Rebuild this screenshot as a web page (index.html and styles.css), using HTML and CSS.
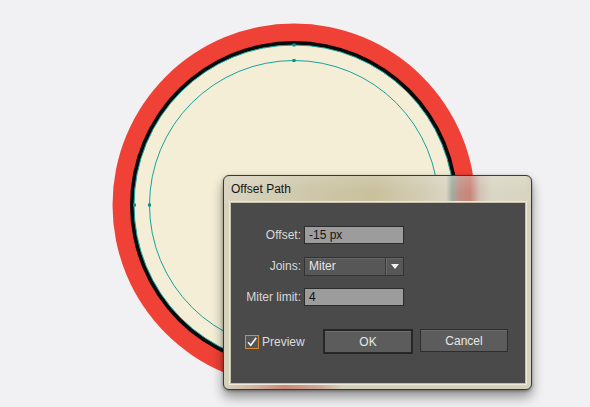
FILE: index.html
```html
<!DOCTYPE html>
<html>
<head>
<meta charset="utf-8">
<link rel="stylesheet" href="styles.css">
</head>
<body>
<div class="stage">
  <svg class="art" width="590" height="407" viewBox="0 0 590 407">
    <circle cx="294" cy="205" r="181.5" fill="#ef4136"/>
    <circle cx="294" cy="205" r="164" fill="#0a0a0a"/>
    <circle cx="294" cy="205" r="160" fill="#f3eed5"/>
    <circle cx="294" cy="205" r="160" fill="none" stroke="#17a2a0" stroke-width="1"/>
    <circle cx="294" cy="205" r="144.5" fill="none" stroke="#17a2a0" stroke-width="1"/>
    <rect x="292.5" y="43.5" width="3" height="3" fill="#0e8f8c"/>
    <rect x="292.5" y="59" width="3" height="3" fill="#0e8f8c"/>
    <rect x="133" y="203.5" width="3" height="3" fill="#0e8f8c"/>
    <rect x="148" y="203.5" width="3" height="3" fill="#0e8f8c"/>
  </svg>

  <div class="dialog">
    <div class="titlebar">Offset Path</div>
    <div class="panel">
      <div class="form">
        <label class="lbl">Offset:</label>
        <div class="field input">-15 px</div>
        <label class="lbl">Joins:</label>
        <div class="field select">
          <span class="sel-text">Miter</span>
          <span class="sel-btn"><span class="arrow"></span></span>
        </div>
        <label class="lbl">Miter limit:</label>
        <div class="field input">4</div>
      </div>
      <div class="footer">
        <div class="check">
          <span class="box">
            <svg width="12" height="12" viewBox="0 0 12 12"><path d="M2 6.2 L4.8 9.2 L10.2 1.8" fill="none" stroke="#f4f4f4" stroke-width="1.6"/></svg>
          </span>
          <span class="check-text">Preview</span>
        </div>
        <div class="buttons">
          <div class="btn btn-default">OK</div>
          <div class="btn">Cancel</div>
        </div>
      </div>
    </div>
  </div>
</div>
</body>
</html>
```

FILE: styles.css
```css
html, body {
  margin: 0;
  padding: 0;
  background: #f1f1f3;
}

.stage {
  position: relative;
  width: 590px;
  height: 407px;
  overflow: hidden;
  font-family: "Liberation Sans", Arial, sans-serif;
}

.art {
  position: absolute;
  left: 0;
  top: 0;
}

.dialog {
  position: absolute;
  left: 223px;
  top: 175px;
  width: 309px;
  height: 215px;
  box-sizing: border-box;
  border: 1px solid #3b3a36;
  border-radius: 6px;
  background:
    linear-gradient(90deg,
      #d9d5c2 0px, #d6d1bb 20px, #cdc6a8 90px, #c9c09d 150px, #d3cdb4 200px,
      #d9d5c1 222px, #9fae9f 228px, #c48f84 236px, #c98579 246px, #d3c3b4 256px,
      #dad6c4 268px, #d8d4c1 309px) top / 100% 27px no-repeat,
    linear-gradient(90deg,
      #d6d1bd 0px, #d2b4a2 30px, #c98a7a 60px, #cfa796 95px, #d6d1bd 120px,
      #d6d1bd 309px) bottom / 100% 6px no-repeat,
    #d6d1bd;
  box-shadow: 0 7px 12px rgba(0, 0, 0, 0.4), 0 1px 3px rgba(0,0,0,0.35);
  display: flex;
  flex-direction: column;
  padding: 0 5px 5px 6px;
}

.titlebar {
  height: 26px;
  box-sizing: border-box;
  padding: 6px 0 0 1px;
  font-size: 12px;
  color: #161616;
  background: linear-gradient(180deg, rgba(255,255,255,0.15), rgba(255,255,255,0) 60%);
}

.panel {
  flex: 1;
  background: #4a4a4a;
  border: 1px solid #c4bfa8;
  box-shadow: 0 0 0 1px #eeeadb;
  display: flex;
  flex-direction: column;
}

.form {
  display: grid;
  grid-template-columns: 70px 100px;
  grid-template-rows: 18px 19px 18px;
  column-gap: 3px;
  row-gap: 12.5px;
  padding-top: 23px;
  align-items: center;
}

.lbl {
  text-align: right;
  font-size: 12px;
  color: #d9d9d9;
  line-height: 18px;
}

.field {
  box-sizing: border-box;
  height: 100%;
  font-size: 12px;
  display: flex;
  align-items: center;
}

.input {
  background: #9c9c9c;
  border: 1px solid #2c2c2c;
  color: #151515;
  padding-left: 4px;
}

.select {
  background: #575757;
  border: 1px solid #333;
  color: #e6e6e6;
  box-shadow: inset 0 1px 0 #666;
}

.sel-text {
  flex: 1;
  padding-left: 4px;
}

.sel-btn {
  width: 17px;
  height: 100%;
  border-left: 1px solid #3a3a3a;
  box-shadow: inset 1px 0 0 #6a6a6a;
  display: flex;
  align-items: center;
  justify-content: center;
}

.arrow {
  width: 0;
  height: 0;
  border-left: 4px solid transparent;
  border-right: 4px solid transparent;
  border-top: 5px solid #f2f2f2;
}

.footer {
  margin-top: 23px;
  display: flex;
  align-items: center;
  padding: 0 17px 0 14px;
}

.check {
  display: flex;
  align-items: center;
  gap: 3px;
}

.box {
  width: 14px;
  height: 14px;
  box-sizing: border-box;
  border: 1px solid #d9882a;
  background: #555;
  display: flex;
  align-items: center;
  justify-content: center;
}

.check-text {
  font-size: 12px;
  color: #dcdcdc;
}

.buttons {
  margin-left: auto;
  display: flex;
  gap: 7px;
}

.btn {
  width: 88px;
  height: 23px;
  box-sizing: border-box;
  border: 1px solid #2e2e2e;
  background: #5c5c5c;
  box-shadow: inset 0 1px 0 #6c6c6c;
  color: #e8e8e8;
  font-size: 12px;
  display: flex;
  align-items: center;
  justify-content: center;
}

.btn-default {
  width: 90px;
  height: 25px;
  border: 2px solid #262626;
}
```
